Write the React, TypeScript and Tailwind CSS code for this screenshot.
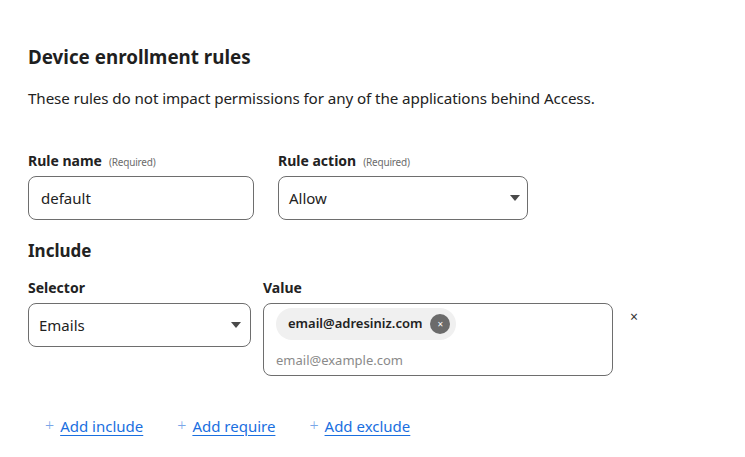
const font = { fontFamily: '"Noto Sans", "Open Sans", sans-serif' };

function Caret() {
    return (
        <svg width="10" height="6" viewBox="0 0 10 6" className="shrink-0">
            <path d="M0 0 L10 0 L5 6 Z" fill="#4a4a4a" />
        </svg>
    );
}

function Label({ text, required }: { text: string; required?: boolean }) {
    return (
        <div className="flex items-baseline gap-[7px] h-[20px] leading-[20px]">
            <span className="text-[14px] font-bold text-[#222]">{text}</span>
            {required && <span className="text-[10px] text-[#6b6b6b] tracking-[-0.2px]">(Required)</span>}
        </div>
    );
}

function AddLink({ text }: { text: string }) {
    return (
        <a href="#" className="flex items-center gap-[6px] text-[15px] text-[#1a6fdf]">
            <span className="text-[16px] font-light text-[#7aa6e8] leading-none -mt-[3px]">+</span>
            <span className="underline underline-offset-[3px] decoration-[1px]">{text}</span>
        </a>
    );
}

export default function App() {
    return (
        <div className="w-[745px] h-[457px] bg-white text-[#222] pl-[28px] pt-[44px]" style={font}>
            <h2 className="text-[18.8px] font-bold leading-[26px] text-[#1f1f1f]">Device enrollment rules</h2>
            <p className="mt-[16px] text-[15.2px] leading-[24px] text-[#222] tracking-[-0.1px]">
                These rules do not impact permissions for any of the applications behind Access.
            </p>

            <div className="mt-[41px] flex gap-[24px]">
                <div className="w-[226px]">
                    <Label text="Rule name" required />
                    <div className="mt-[5px] h-[44px] rounded-[8px] border border-[#6e6e6e] flex items-center px-[12px] text-[15px] text-[#222]">
                        default
                    </div>
                </div>
                <div className="w-[250px]">
                    <Label text="Rule action" required />
                    <div className="mt-[5px] h-[44px] rounded-[8px] border border-[#6e6e6e] flex items-center justify-between pl-[10px] pr-[7px] text-[15px] text-[#222]">
                        Allow
                        <Caret />
                    </div>
                </div>
            </div>

            <h3 className="mt-[19px] text-[17px] font-bold leading-[24px] text-[#222]">Include</h3>

            <div className="mt-[15px] flex items-start">
                <div className="w-[223px]">
                    <Label text="Selector" />
                    <div className="mt-[5px] h-[44px] rounded-[8px] border border-[#6e6e6e] flex items-center justify-between pl-[10px] pr-[9px] text-[15px] text-[#222]">
                        Emails
                        <Caret />
                    </div>
                </div>
                <div className="ml-[12px] w-[350px]">
                    <Label text="Value" />
                    <div className="mt-[5px] h-[73px] rounded-[8px] border border-[#6e6e6e] px-[12px] pt-[4px]">
                        <div className="inline-flex items-center h-[32px] rounded-full bg-[#f0f0f0] pl-[12px] pr-[6px] gap-[8px]">
                            <span className="text-[13px] font-semibold text-[#222]">email@adresiniz.com</span>
                            <span className="w-[20px] h-[20px] rounded-full bg-[#6b6b6b] flex items-center justify-center text-white text-[10px] leading-none">×</span>
                        </div>
                        <div className="mt-[11px] text-[13px] leading-[18px] text-[#8a8a8a]">email@example.com</div>
                    </div>
                </div>
                <button className="ml-[17px] mt-[32px] text-[14px] leading-none text-[#333]">×</button>
            </div>

            <div className="mt-[39px] ml-[17px] flex gap-[34px]">
                <AddLink text="Add include" />
                <AddLink text="Add require" />
                <AddLink text="Add exclude" />
            </div>
        </div>
    );
}
